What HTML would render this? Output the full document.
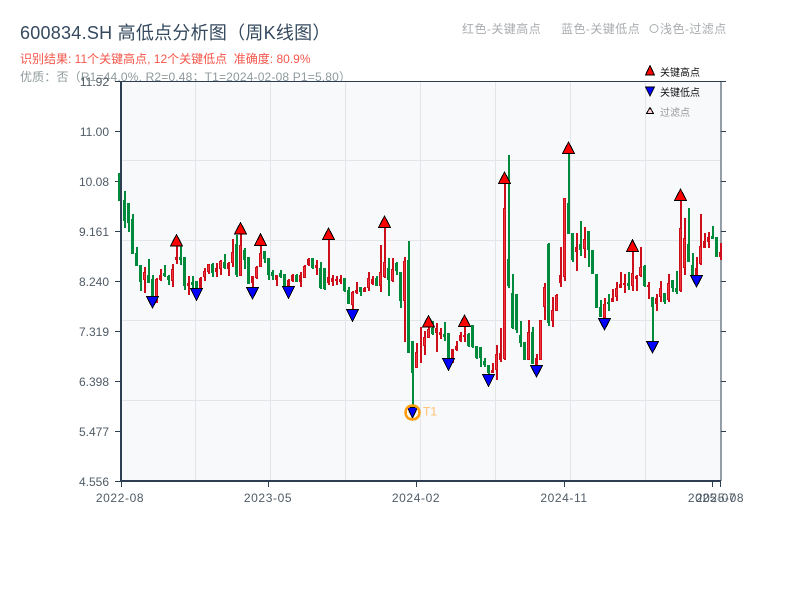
<!DOCTYPE html>
<html><head><meta charset="utf-8"><style>
html,body{margin:0;padding:0;background:#fff}
svg{display:block}
text{font-family:"Liberation Sans","Noto Sans CJK SC",sans-serif}
.y{font-size:12px;fill:#4f5b66;text-anchor:end}
.x{font-size:12px;fill:#4f5b66;text-anchor:middle;letter-spacing:.6px}
.lg{font-size:12px;fill:#a9adb0;letter-spacing:.45px}
.c{shape-rendering:crispEdges}
</style></head><body>
<svg width="800" height="600" viewBox="0 0 800 600" xmlns="http://www.w3.org/2000/svg">
<rect width="800" height="600" fill="#fff"/>
<text x="20" y="39" font-size="18" fill="#34495e" style="letter-spacing:.25px">600834.SH 高低点分析图（周K线图）</text>
<text x="20" y="63" font-size="12" fill="#f4564a">识别结果: 11个关键高点, 12个关键低点&#160;&#160;准确度: 80.9%</text>
<text x="20" y="81" font-size="12" fill="#8f9a9c" style="letter-spacing:.17px">优质：否（R1=44.0%, R2=0.48；T1=2024-02-08 P1=5.80）</text>
<text class="lg" x="462" y="33">红色-关键高点</text>
<text class="lg" x="561" y="33">蓝色-关键低点</text>
<circle cx="654" cy="28.5" r="4" fill="none" stroke="#a9adb0" stroke-width="1"/>
<text class="lg" x="660" y="33">浅色-过滤点</text>
<rect x="121" y="81" width="600" height="400" fill="#f7f9fb"/>
<path d="M195.5 81V481M270.5 81V481M345.5 81V481M420.5 81V481M495.5 81V481M570.5 81V481M645.5 81V481M121 160.5H721M121 240.5H721M121 320.5H721M121 400.5H721" stroke="#e2e5ea" stroke-width="1" fill="none"/>
<path d="M121 81.5H726M721 81V481M721 131.5H726M721 181.5H726M721 231.5H726M721 281.5H726M721 331.5H726M721 381.5H726M721 431.5H726" stroke="#2c3e50" stroke-width="1" fill="none"/>
<path d="M115 81.5H121M115 131.5H121M115 181.5H121M115 231.5H121M115 281.5H121M115 331.5H121M115 381.5H121M115 431.5H121M115 481.5H121M121.5 481V487M268.5 481V487M416.5 481V487M564.5 481V487M712.5 481V487M720.5 481V487" stroke="#2c3e50" stroke-width="1" fill="none"/>

<path class="c" transform="translate(.5 0)" fill="none" stroke="#008a3c" stroke-width="2" d="M119.5 173V201M124.5 191V228M128.5 203V232M132.5 214V254M136.5 247V266M140.5 265V291M148.5 259V283M152.5 275V297M164.5 265V277M168.5 275V285M180.5 246V265M184.5 257V290M192.5 276V288M196.5 281V288M212.5 263V277M224.5 254V269M236.5 235V277M244.5 248V269M248.5 257V284M264.5 251V263M268.5 258V280M272.5 270V280M280.5 270V278M284.5 274V288M296.5 274V282M312.5 258V269M320.5 262V289M324.5 268V290M344.5 278V292M348.5 287V304M360.5 287V296M376.5 276V286M388.5 258V296M396.5 262V275M400.5 272V308M408.5 241V353M412.5 341V407M432.5 321V335M444.5 322V341M448.5 333V358M468.5 333V347M472.5 325V348M476.5 346V359M480.5 347V367M484.5 358V367M488.5 365V375M508.5 155V288M512.5 274V329M516.5 294V333M520.5 321V347M524.5 342V360M532.5 327V364M548.5 243V326M568.5 153V234M572.5 233V262M580.5 221V256M588.5 231V267M592.5 250V274M596.5 274V308M600.5 300V317M608.5 294V311M628.5 272V290M644.5 265V287M652.5 297V342M664.5 293V304M672.5 280V292M676.5 271V294M688.5 208V262M692.5 253V277M712.5 226V239M716.5 237V257"/>
<path class="c" fill="none" stroke="#008a3c" stroke-width="3" d="M119.5 173V201M124.5 200V221M128.5 203V223M132.5 219V254M136.5 253V266M140.5 265V282M148.5 275V283M152.5 279V297M164.5 273V276M168.5 276V280M180.5 257V260M184.5 257V286M192.5 282V285M196.5 281V288M212.5 264V273M224.5 262V268M236.5 244V275M244.5 250V260M248.5 257V284M264.5 251V259M268.5 258V275M272.5 272V276M280.5 273V277M284.5 274V287M296.5 275V282M312.5 258V268M320.5 268V288M324.5 268V289M344.5 278V291M348.5 290V304M360.5 287V292M376.5 278V286M388.5 268V280M396.5 263V271M400.5 272V301M408.5 260V353M412.5 341V373M432.5 328V334M444.5 334V337M448.5 333V358M468.5 334V346M472.5 325V347M476.5 346V358M480.5 347V358M484.5 361V365M488.5 365V373M508.5 259V286M512.5 293V328M516.5 294V330M520.5 335V343M524.5 342V360M532.5 332V364M548.5 244V323M568.5 203V234M572.5 233V260M580.5 244V250M588.5 231V250M592.5 250V274M596.5 274V308M600.5 307V317M608.5 302V304M628.5 283V286M644.5 266V286M652.5 297V307M664.5 293V302M672.5 280V288M676.5 288V292M688.5 244V262M692.5 265V276M712.5 236V239M716.5 237V257"/>
<path class="c" transform="translate(.5 0)" fill="none" stroke="#cc0f1a" stroke-width="2" d="M144.5 267V293M156.5 278V303M160.5 269V281M172.5 264V287M176.5 245V264M188.5 276V295M200.5 277V288M204.5 268V281M208.5 264V274M216.5 263V277M220.5 260V275M228.5 262V276M232.5 239V267M240.5 233V276M252.5 276V287M256.5 266V279M260.5 243V267M276.5 275V286M288.5 279V288M292.5 274V282M300.5 272V287M304.5 265V278M308.5 258V266M316.5 260V275M328.5 238V285M332.5 275V286M336.5 276V285M340.5 275V284M352.5 291V309M356.5 282V294M364.5 287V292M368.5 272V291M372.5 276V285M380.5 245V292M384.5 227V278M392.5 258V282M404.5 257V342M416.5 343V368M420.5 327V363M424.5 331V355M428.5 320V338M436.5 323V352M440.5 328V339M452.5 349V363M456.5 341V351M460.5 332V342M464.5 327V342M492.5 363V373M496.5 345V380M500.5 328V362M504.5 183V360M528.5 320V360M536.5 354V367M540.5 320V360M544.5 283V320M552.5 297V327M556.5 294V311M560.5 247V287M564.5 198V281M576.5 233V271M584.5 227V258M604.5 298V320M612.5 289V302M616.5 282V301M620.5 272V288M624.5 274V293M632.5 252V291M636.5 275V291M640.5 247V277M648.5 282V299M656.5 294V311M660.5 281V302M668.5 274V302M680.5 200V292M684.5 218V275M696.5 257V277M700.5 214V265M704.5 233V248M708.5 232V248M720.5 243V260"/>
<path class="c" fill="none" stroke="#cc0f1a" stroke-width="3" d="M144.5 272V280M156.5 279V300M160.5 275V280M172.5 269V281M176.5 257V260M188.5 283V286M200.5 278V288M204.5 271V277M208.5 264V272M216.5 268V272M220.5 261V269M228.5 263V269M232.5 252V263M240.5 245V276M252.5 276V283M256.5 267V278M260.5 253V267M276.5 275V280M288.5 280V287M292.5 275V281M300.5 275V282M304.5 266V278M308.5 259V265M316.5 265V268M328.5 277V283M332.5 278V282M336.5 279V281M340.5 279V282M352.5 292V305M356.5 290V293M364.5 288V292M368.5 278V288M372.5 279V284M380.5 272V286M384.5 262V277M392.5 269V281M404.5 261V301M416.5 352V368M424.5 337V346M428.5 329V338M436.5 328V333M440.5 332V335M452.5 349V358M456.5 346V350M460.5 335V341M464.5 335V337M492.5 370V373M496.5 354V370M500.5 353V360M504.5 208V359M528.5 332V360M536.5 358V365M540.5 320V360M544.5 287V307M552.5 310V321M556.5 295V311M560.5 275V283M564.5 198V277M576.5 247V252M584.5 239V249M604.5 304V318M612.5 298V302M616.5 288V297M620.5 284V288M624.5 283V285M632.5 273V286M636.5 276V279M640.5 267V276M648.5 285V287M656.5 298V304M660.5 288V297M668.5 283V300M680.5 228V291M684.5 238V268M696.5 268V276M700.5 246V264M704.5 241V248M708.5 237V242M720.5 252V257"/>
<path class="c" fill="none" stroke="#f0353c" stroke-width="1" d="M144.5 273V279M156.5 280V299M172.5 270V280M204.5 272V276M208.5 265V271M220.5 262V268M232.5 253V262M240.5 246V275M256.5 268V277M260.5 254V266M304.5 267V277M352.5 293V304M368.5 279V287M380.5 273V285M384.5 263V276M392.5 270V280M404.5 262V300M416.5 353V367M424.5 338V345M428.5 330V337M496.5 355V369M504.5 209V358M528.5 333V359M540.5 321V359M544.5 288V306M552.5 311V320M556.5 296V310M564.5 199V276M584.5 240V248M604.5 305V317M616.5 289V296M632.5 274V285M640.5 268V275M660.5 289V296M668.5 284V299M680.5 229V290M684.5 239V267M700.5 247V263"/>

<path d="M121 81V482" stroke="#2c3e50" stroke-width="2" fill="none"/>
<path d="M120 481H721" stroke="#2c3e50" stroke-width="2" fill="none"/>

<g class="c" fill="#ff0000" stroke="#000" stroke-width="1">
<path d="M176.5 234.5L182.5 246H170.5Z"/>
<path d="M240.5 222.5L246.5 234H234.5Z"/>
<path d="M260.5 233.8L266.5 245.5H254.5Z"/>
<path d="M328.5 228L334.5 239.5H322.5Z"/>
<path d="M384.5 216L390.5 227.5H378.5Z"/>
<path d="M428.5 315.5L434.5 327H422.5Z"/>
<path d="M464.5 315L470.5 326.5H458.5Z"/>
<path d="M504.5 172L510.5 183.5H498.5Z"/>
<path d="M568.5 142L574.5 153.5H562.5Z"/>
<path d="M632.5 239.8L638.5 251.5H626.5Z"/>
<path d="M680.5 189L686.5 200.5H674.5Z"/>
</g>
<g class="c" fill="#0000ff" stroke="#000" stroke-width="1">
<path d="M146.5 296.5H158.5L152.5 308Z"/>
<path d="M190.5 288.5H202.5L196.5 300.5Z"/>
<path d="M246.5 287.5H258.5L252.5 299Z"/>
<path d="M282.5 286.5H294.5L288.5 298.5Z"/>
<path d="M346.5 309.5H358.5L352.5 321.5Z"/>
<path d="M442.5 358.5H454.5L448.5 370.5Z"/>
<path d="M482.5 374.5H494.5L488.5 386.5Z"/>
<path d="M530.5 365.5H542.5L536.5 377Z"/>
<path d="M598.5 318.5H610.5L604.5 330Z"/>
<path d="M646.5 341.5H658.5L652.5 353Z"/>
<path d="M690.5 275.5H702.5L696.5 287Z"/>
<path d="M407.5 407.5H417.5L412.5 418Z"/>
</g>
<circle class="c" cx="412.5" cy="412.5" r="7" fill="none" stroke="#ff9f0f" stroke-width="2.6"/>
<text x="423" y="415.5" font-size="12" fill="#ffc070">T1</text>

<g>
<path class="c" d="M650 65.5L654.5 75H645.5Z" fill="#ff0000" stroke="#000" stroke-width="1"/>
<text x="660" y="76" font-size="10" fill="#111">关键高点</text>
<path class="c" d="M645.5 87H654.5L650 96Z" fill="#0000ff" stroke="#000" stroke-width="1"/>
<text x="660" y="96" font-size="10" fill="#111">关键低点</text>
<path class="c" d="M650 107.5L653.5 113.5H646.5Z" fill="#ffd0d8" stroke="#000" stroke-width="1"/>
<text x="660" y="116" font-size="10" fill="#999">过滤点</text>
</g>

<text class="y" x="109" y="86">11.92</text>
<text class="y" x="109" y="136">11.00</text>
<text class="y" x="109" y="186">10.08</text>
<text class="y" x="109" y="236">9.161</text>
<text class="y" x="109" y="286">8.240</text>
<text class="y" x="109" y="336">7.319</text>
<text class="y" x="109" y="386">6.398</text>
<text class="y" x="109" y="436">5.477</text>
<text class="y" x="109" y="486">4.556</text>
<text class="x" x="120" y="502">2022-08</text>
<text class="x" x="268" y="502">2023-05</text>
<text class="x" x="416" y="502">2024-02</text>
<text class="x" x="564" y="502">2024-11</text>
<text class="x" x="712" y="502">2025-07</text>
<text class="x" x="720" y="502">2025-08</text>
</svg>
</body></html>
